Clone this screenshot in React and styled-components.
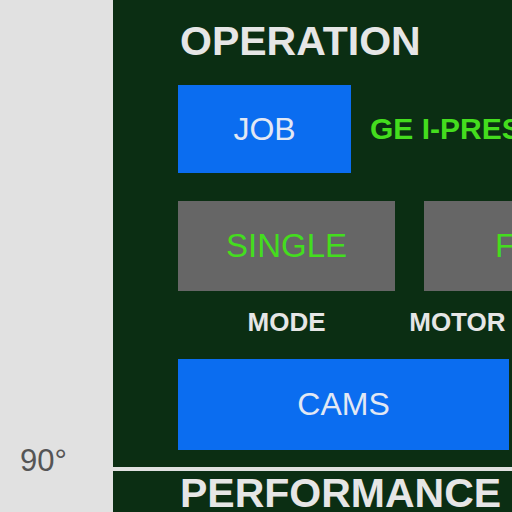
import React from "react";
import styled, { createGlobalStyle } from "styled-components";

const GlobalStyle = createGlobalStyle`
  html, body {
    margin: 0;
    padding: 0;
    background: #e1e1e1;
    overflow: hidden;
  }
  body {
    font-family: "Liberation Sans", Arial, sans-serif;
  }
`;

const App = () => {
  return (
    <Screen>
      <GlobalStyle />
      <SideColumn>
        <Angle>90°</Angle>
      </SideColumn>

      <MainColumn>
        <Panel bottom={17}>
          <SectionTitle>OPERATION</SectionTitle>

          <JobRow>
            <Button color="blue" w={173} h={88}>JOB</Button>
            <JobName>GE I-PRESS 200</JobName>
          </JobRow>

          <ToggleRow>
            <Toggle w={217}>
              <Button color="gray" w={217} h={90} green>SINGLE</Button>
              <Caption>MODE</Caption>
            </Toggle>
            <Toggle w={217}>
              <Button color="gray" w={217} h={90} green>FWD</Button>
              <Caption>MOTOR DIRECTION</Caption>
            </Toggle>
          </ToggleRow>

          <Button color="blue" w={331} h={91}>CAMS</Button>
        </Panel>

        <Panel>
          <SectionTitle tight>PERFORMANCE</SectionTitle>
        </Panel>
      </MainColumn>
    </Screen>
  );
};

const Screen = styled.div`
  display: flex;
  width: 512px;
  height: 512px;
  overflow: hidden;
  background: #e1e1e1;
`;

const SideColumn = styled.div`
  width: 113px;
  flex-shrink: 0;
  padding: 444px 0 0 20px;
  box-sizing: border-box;
`;

const Angle = styled.div`
  font-size: 31px;
  line-height: 34px;
  color: #555555;
`;

const MainColumn = styled.div`
  display: flex;
  flex-direction: column;
  gap: 4px;
  min-width: 600px;
`;

const Panel = styled.section`
  background: #0b2e13;
  padding: 18px 0 ${(p) => p.bottom || 40}px 65px;
  display: flex;
  flex-direction: column;
  align-items: flex-start;

  &:last-child {
    padding-top: 1px;
  }
`;

const SectionTitle = styled.h2`
  margin: 0 0 ${(p) => (p.tight ? 0 : 21)}px 2px;
  font-size: 41px;
  line-height: ${(p) => (p.tight ? 42 : 46)}px;
  font-weight: 700;
  color: #e6e6e6;
  white-space: nowrap;
`;

const JobRow = styled.div`
  display: flex;
  align-items: center;
  gap: 19px;
  margin-bottom: 28px;
`;

const Button = styled.div`
  width: ${(p) => p.w}px;
  height: ${(p) => p.h}px;
  flex-shrink: 0;
  display: flex;
  align-items: center;
  justify-content: center;
  background: ${(p) => (p.color === "blue" ? "#0b6df0" : "#666666")};
  color: ${(p) => (p.green ? "#44dd1e" : "#e2e8f4")};
  font-size: ${(p) => (p.green ? 33 : 32)}px;
  white-space: nowrap;
`;

const JobName = styled.div`
  font-size: 30px;
  font-weight: 700;
  color: #44dd1e;
  white-space: nowrap;
`;

const ToggleRow = styled.div`
  display: flex;
  gap: 29px;
  margin-bottom: 22px;
`;

const Toggle = styled.div`
  width: ${(p) => p.w}px;
  flex-shrink: 0;
  display: flex;
  flex-direction: column;
  align-items: center;
  gap: 16px;
`;

const Caption = styled.div`
  font-size: 26px;
  line-height: 30px;
  font-weight: 700;
  color: #e6e6e6;
  white-space: nowrap;
`;

export default App;
